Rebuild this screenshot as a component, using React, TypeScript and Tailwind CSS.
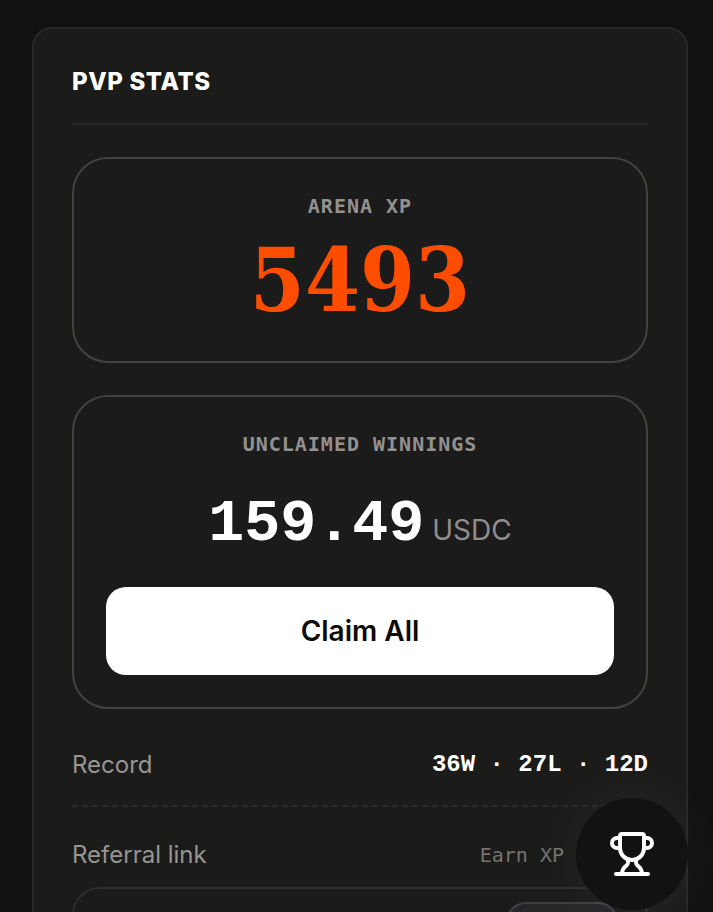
import type { ReactNode } from 'react'
import { Trophy } from 'lucide-react'

const stats = {
  arenaXp: '5493',
  unclaimed: '159.49',
  currency: 'USDC',
  record: '36W · 27L · 12D',
}

function StatBox({ label, children }: { label: string; children: ReactNode }) {
  return (
    <section className="flex flex-col rounded-[36px] border-2 border-[#424242] bg-[#1b1b1b] p-8 text-center">
      <h3 className="font-['DejaVu_Sans_Mono',monospace] text-[20px] leading-[30px] font-bold tracking-wider text-[#92918f] uppercase">
        {label}
      </h3>
      {children}
    </section>
  )
}

function StatRow({ label, children }: { label: string; children: ReactNode }) {
  return (
    <div className="flex items-center justify-between text-[24px] leading-9">
      <span className="text-[#969593]">{label}</span>
      {children}
    </div>
  )
}

export default function App() {
  return (
    <div className="min-h-screen bg-[#11110f] pt-[27px] pr-[25px] pb-8 pl-8 font-['Inter',sans-serif]">
      <main className="rounded-[20px] border-2 border-[#272727] bg-[#1b1b19] px-[38px] pt-[35px] pb-10">
        <h2 className="border-b-2 border-[#272727] pb-[23px] text-[24px] leading-9 font-extrabold tracking-wide text-white">
          PVP STATS
        </h2>

        <div className="mt-8 flex flex-col gap-8">
          <StatBox label="Arena XP">
            <p className="pt-2.5 font-['DejaVu_Serif_Condensed','DejaVu_Serif',serif] text-[88px] leading-[98px] font-bold text-[#ff4d00]">
              {stats.arenaXp}
            </p>
          </StatBox>

          <StatBox label="Unclaimed Winnings">
            <p className="flex items-baseline justify-center gap-2 pt-[27px] leading-[76px]">
              <span className="font-['Liberation_Mono',monospace] text-[60px] font-bold text-white">
                {stats.unclaimed}
              </span>
              <span className="text-[28px] text-[#8f8e8c]">{stats.currency}</span>
            </p>
            <button
              type="button"
              className="mt-[19px] h-[88px] rounded-[20px] bg-white text-[28px] font-semibold text-[#0b0b0b]"
            >
              Claim All
            </button>
          </StatBox>
        </div>

        {/* Win / loss record */}
        <div className="mt-[38px] border-b-2 border-dashed border-[#292929] pb-[22px]">
          <StatRow label="Record">
            <span className="font-['Liberation_Mono',monospace] font-bold text-white">
              {stats.record}
            </span>
          </StatRow>
        </div>

        {/* Referral */}
        <div className="pt-[30px]">
          <StatRow label="Referral link">
            <span className="pr-[84px] font-['DejaVu_Sans_Mono',monospace] text-[20px] text-[#747371]">
              Earn XP
            </span>
          </StatRow>
          <div className="mt-3.5 flex justify-end rounded-[28px] border-2 border-[#2d2d2d] bg-[#1b1b1b] py-[13px] pr-7">
            <button
              type="button"
              aria-label="Copy referral link"
              className="h-14 w-[112px] rounded-[20px] border-2 border-[#3f3f44] bg-[#27272a]"
            />
          </div>
        </div>
      </main>

      <button
        type="button"
        aria-label="Leaderboard"
        className="fixed right-[25px] bottom-[2px] flex size-28 items-center justify-center rounded-full bg-[#121212] text-white shadow-[0_0_60px_rgba(255,255,255,0.06)]"
      >
        <Trophy className="size-12" />
      </button>
    </div>
  )
}
